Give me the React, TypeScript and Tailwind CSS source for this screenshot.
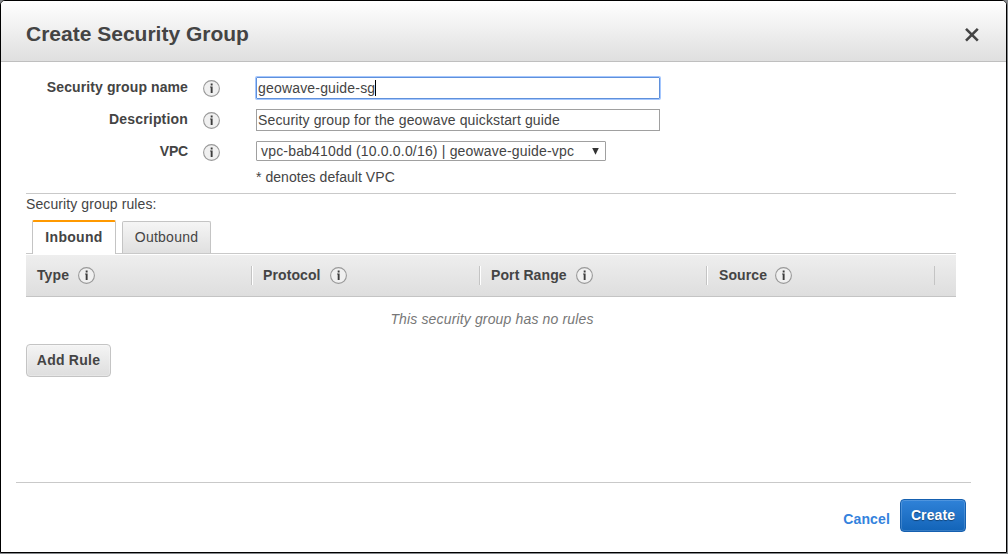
import { useState } from "react";

function Info() {
  return (
    <svg className="block h-[17px] w-[17px] shrink-0" viewBox="0 0 17 17">
      <circle cx="8.5" cy="8.5" r="7.9" fill="#f0f0f0" stroke="#999" strokeWidth="1.1" />
      <path d="M7.7 3.4h1.9v2H7.7zM7.1 6.6h2.5V13H7.7V7.6h-.6z" fill="#3c3c3c" />
    </svg>
  );
}

function Label({ children, track }: { children: string; track: string }) {
  return (
    <div className="flex w-[220px] shrink-0 justify-end gap-[15px] pt-[3px]">
      <span className={`text-[14px] leading-4 font-bold ${track}`}>{children}</span>
      <span className="pt-[1px]">
        <Info />
      </span>
    </div>
  );
}

function Column({ label, className }: { label: string; className: string }) {
  return (
    <div className={`flex h-[19px] items-center border-r border-[#c4c4c4] ${className}`}>
      <span className="-mt-[2px] text-[14px] leading-4 font-bold tracking-[0.1px]">{label}</span>
      <Info />
    </div>
  );
}

export default function App() {
  const [tab, setTab] = useState("Inbound");
  const columns = [
    { label: "Type", className: "w-[226px] gap-[9px] pl-[11px] shadow-[1px_0_0_#fff]" },
    { label: "Protocol", className: "w-[228px] gap-[9px] pl-[11px] shadow-[1px_0_0_#fff]" },
    { label: "Port Range", className: "w-[227px] gap-[9px] pl-[11px] shadow-[1px_0_0_#fff]" },
    { label: "Source", className: "w-[228px] gap-[8px] pl-[12px]" },
  ];
  return (
    <div className="h-[554px] w-[1008px] overflow-hidden bg-[#85888b] font-['Liberation_Sans',Arial,sans-serif] text-[14px] leading-4 text-[#444]">
      <div className="flex h-[553px] w-[1007px] flex-col rounded-t-[5px] border border-black bg-white">
        <header className="flex h-[61px] shrink-0 items-center justify-between rounded-t-[4px] border-b border-[#bfbfbf] bg-linear-to-b from-white to-[#dfdfdf] pr-[27px] pl-[25px]">
          <h1 className="pt-[5px] text-[21px] leading-6 font-bold">Create Security Group</h1>
          <button aria-label="Close" className="pt-[7px]">
            <svg className="block h-[14px] w-[14px]" viewBox="0 0 14 14">
              <path d="M1 .9l11.8 11.8M12.8 .9L1 12.7" stroke="#444" strokeWidth="2.6" />
            </svg>
          </button>
        </header>
        <main className="flex h-[420px] flex-col pt-[14px] pl-[25px]">
          <section className="flex h-[118px] w-[930px] flex-col border-b border-[#c9c9c9]">
            <div className="-ml-[26px] flex h-8">
              <Label track="tracking-[0.1px]">Security group name</Label>
              <div className="mt-[1px] ml-[36px] flex h-[22px] w-[404px] items-center rounded-[1px] border border-[#5f90db] pl-[1px] shadow-[0_0_0_1px_#a5c7fe]">
                <span className="tracking-[0.18px]">geowave-guide-sg</span>
                <span className="h-4 w-px bg-black" />
              </div>
            </div>
            <div className="-ml-[26px] flex h-8">
              <Label track="tracking-[0.18px]">Description</Label>
              <div className="mt-[1px] ml-[36px] flex h-[22px] w-[404px] items-center border border-[#a0a0a0] pl-[1px] tracking-[0.13px]">
                Security group for the geowave quickstart guide
              </div>
            </div>
            <div className="-ml-[26px] flex h-8">
              <Label track="tracking-[-0.2px]">VPC</Label>
              <div className="mt-[1px] ml-[36px] flex h-5 w-[350px] items-center justify-between rounded-[1px] border border-[#a0a0a0] pr-[6px] pl-[4px]">
                <span className="tracking-[0.18px]">vpc-bab410dd (10.0.0.0/16) | geowave-guide-vpc</span>
                <svg className="h-[7px] w-[7px]" viewBox="0 0 7 7">
                  <path d="M.2 0h6.6L3.5 6.8z" fill="#333" />
                </svg>
              </div>
            </div>
            <p className="-mt-[3px] ml-[230px] tracking-[0.05px]">* denotes default VPC</p>
          </section>
          <p className="mt-[2px] tracking-[0.1px]">Security group rules:</p>
          <section className="mt-2 w-[930px]">
            <div className="flex h-[34px] items-end gap-[6px] border-b border-[#c9c9c9] pl-[6px]">
              <button
                onClick={() => setTab("Inbound")}
                className="-mb-px flex h-[34px] w-[84px] items-center justify-center rounded-t-[2px] border-x border-t-2 border-x-[#c4c4c4] border-t-[#f90] bg-white pb-[2px] font-bold tracking-[0.3px]"
              >
                Inbound
              </button>
              <button
                onClick={() => setTab("Outbound")}
                className="flex h-8 w-[89px] items-center justify-center rounded-t-[2px] border border-b-0 border-[#c4c4c4] bg-linear-to-b from-[#f5f5f5] to-[#e0e0e0] pb-px tracking-[0.25px]"
              >
                Outbound
              </button>
            </div>
            <div className="mt-px flex h-[42px] items-center border-b border-[#c4c4c4] bg-linear-to-b from-[#eee] to-[#dedede]">
              {columns.map((c) => (
                <Column key={c.label} {...c} />
              ))}
            </div>
            <p className="mt-[14px] pl-[2px] text-center tracking-[0.15px] text-[#777] italic">
              {tab === "Inbound" || tab === "Outbound" ? "This security group has no rules" : ""}
            </p>
          </section>
          <button className="mt-[17px] flex h-[33px] w-[85px] items-center justify-center rounded-[4px] border border-[#c4c4c4] bg-linear-to-b from-[#f4f4f4] to-[#dedede] pb-[2px] font-bold tracking-[0.25px] shadow-[inset_0_0_0_1px_#ffffff40]">
            Add Rule
          </button>
        </main>
        <footer className="mr-[35px] ml-[15px] flex h-[70px] justify-end border-t border-[#c9c9c9] pt-[16px] pr-[5px]">
          <button className="mt-[12px] mr-[10px] h-4 font-bold tracking-[0.15px] text-[#3382dd]">Cancel</button>
          <button className="flex h-[33px] w-[66px] items-center justify-center rounded-[4px] border border-[#1560b0] bg-linear-to-b from-[#2f82d8] to-[#1264b8] pb-[2px] font-bold tracking-[0.1px] text-white shadow-[inset_0_0_0_1px_#ffffff28] [text-shadow:0_1px_1px_#0006]">
            Create
          </button>
        </footer>
      </div>
    </div>
  );
}
